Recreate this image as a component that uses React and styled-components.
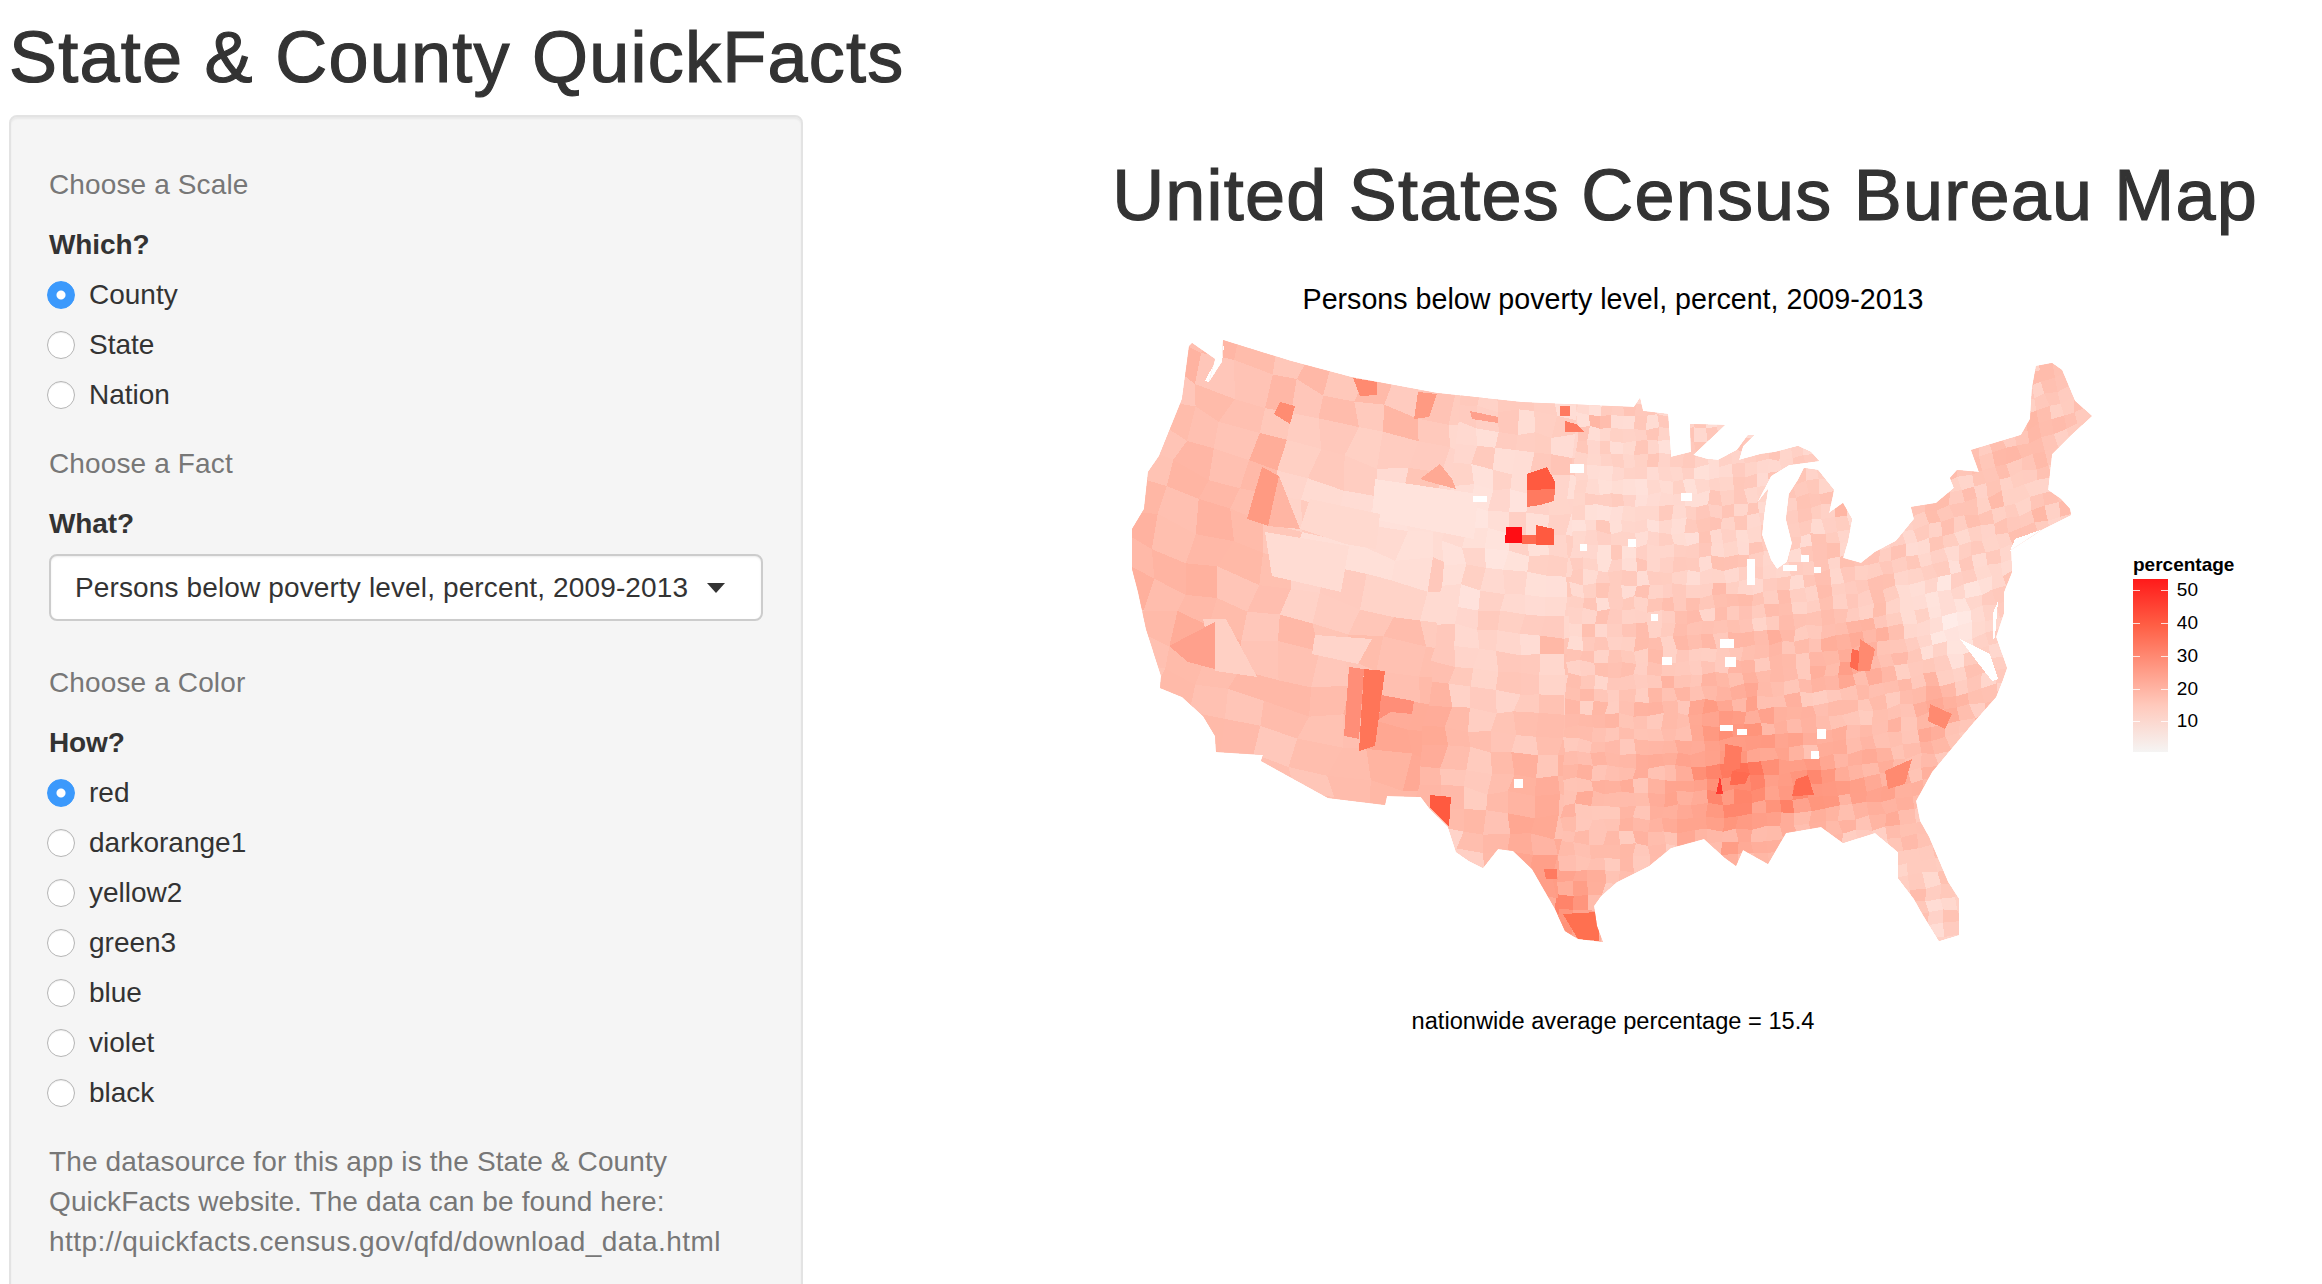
import React, { useMemo } from 'react';
import styled, { createGlobalStyle } from 'styled-components';

const GlobalStyle = createGlobalStyle`
  html, body {
    margin: 0;
    height: 1284px;
    overflow: hidden;
    background: #fff;
    font-family: "Liberation Sans", Arial, sans-serif;
    color: #333;
  }
  * { box-sizing: border-box; }
`;

const Page = styled.div`
  padding: 18px 0 0 9px;
`;

const Title = styled.h1`
  margin: 0 0 18px;
  font-size: 72px;
  line-height: 79px;
  font-weight: 400;
  letter-spacing: 1.25px;
  -webkit-text-stroke: 1.2px #333;
  color: #333;
`;

const Row = styled.div`
  display: flex;
  align-items: flex-start;
`;

const Sidebar = styled.form`
  flex: none;
  width: 794px;
  padding: 48px 38px 60px 38px;
  background: #f5f5f5;
  border: 2px solid #e3e3e3;
  border-radius: 8px;
  box-shadow: inset 0 2px 2px rgba(0, 0, 0, 0.05);
`;

const Muted = styled.p`
  margin: ${p => p.$top || 0}px 0 20px;
  font-size: 28px;
  line-height: 40px;
  letter-spacing: 0.13px;
  color: #777;
`;

const Url = styled.span`
  letter-spacing: 0.45px;
`;

const FieldLabel = styled.label`
  display: block;
  margin-bottom: ${p => p.$gap}px;
  font-size: 28px;
  line-height: 40px;
  font-weight: 700;
  letter-spacing: -0.1px;
  color: #333;
`;

const RadioRow = styled.label`
  display: flex;
  align-items: center;
  height: 50px;
  font-size: 28px;
  color: #333;
`;

const Radio = styled.input`
  appearance: none;
  flex: none;
  width: 28px;
  height: 28px;
  margin: 0 14px 0 -2px;
  border-radius: 50%;
  background: #fff;
  border: 1px solid #b5b5b5;
  box-shadow: inset 0 1px 1px rgba(0, 0, 0, 0.08);
  &:checked {
    background: radial-gradient(circle, #fff 0 4px, #3b99fc 5px);
    border-color: #3b99fc;
    box-shadow: none;
  }
`;

const SelectBox = styled.div`
  display: flex;
  align-items: center;
  justify-content: space-between;
  height: 67px;
  padding: 0 36px 0 24px;
  margin-bottom: 42px;
  background: #fff;
  border: 2px solid #ccc;
  border-radius: 8px;
  font-size: 28px;
  letter-spacing: 0.13px;
  color: #333;
  box-shadow: inset 0 1px 2px rgba(0, 0, 0, 0.08);
  white-space: nowrap;
`;

const Caret = styled.span`
  width: 0;
  height: 0;
  border-style: solid;
  border-width: 10px 9px 0 9px;
  border-color: #333 transparent transparent transparent;
`;

const Main = styled.main`
  flex: 1;
  min-width: 0;
  padding-top: 41px;
`;

const Heading = styled.h1`
  margin: 0 64px 44px 0;
  font-size: 72px;
  line-height: 79px;
  font-weight: 400;
  letter-spacing: 1.2px;
  text-align: right;
  white-space: nowrap;
  -webkit-text-stroke: 1.2px #333;
  color: #333;
`;

const Plot = styled.div`
  display: flex;
  margin-left: 327px;
`;

const MapColumn = styled.div`
  flex: none;
  width: 966px;
  text-align: center;
  color: #000;
`;

const PlotTitle = styled.div`
  font-size: 28.65px;
  line-height: 40px;
  margin-bottom: 10px;
`;

const PlotNote = styled.div`
  font-size: 23.65px;
  line-height: 40px;
  margin-top: 42px;
`;

const MapSvg = styled.svg`
  display: block;
  width: 966px;
  height: 630px;
`;

const Legend = styled.div`
  flex: none;
  margin: 274px 0 0 37px;
  color: #000;
`;

const LegendTitle = styled.div`
  font-size: 19px;
  line-height: 24px;
  font-weight: 700;
  margin-bottom: 2px;
`;

const LegendBody = styled.div`
  display: flex;
  gap: 9px;
`;

const LegendBar = styled.div`
  position: relative;
  width: 35px;
  height: 173px;
  background: linear-gradient(#ff1a1a, #ff5f45 27%, #ff9a85 52%, #ffc9bc 73%, #f5f4f3);
`;

const Tick = styled.i`
  position: absolute;
  left: 0;
  right: 0;
  height: 1px;
  border-left: 7px solid rgba(255, 255, 255, 0.8);
  border-right: 7px solid rgba(255, 255, 255, 0.8);
`;

const LegendLabels = styled.div`
  position: relative;
  width: 21px;
  font-size: 19px;
`;

const LegendLabel = styled.span`
  position: absolute;
  right: 0;
  line-height: 20px;
  margin-top: -10px;
`;

const OUTLINE = [
  [1223, 341], [1291, 362], [1351, 378], [1437, 394], [1521, 403], [1634, 408], [1640, 399], [1643, 412], [1668, 415],
  [1671, 458], [1691, 453], [1690, 425], [1725, 426], [1693, 456], [1707, 460], [1718, 461], [1737, 451], [1748, 436],
  [1754, 436], [1743, 447], [1739, 461], [1761, 455], [1775, 453], [1798, 447], [1811, 453], [1819, 462], [1789, 466],
  [1771, 477], [1757, 504], [1768, 490], [1764, 516], [1762, 536], [1771, 561], [1777, 570], [1787, 563], [1792, 544],
  [1786, 520], [1789, 495], [1798, 481], [1804, 469], [1818, 471], [1834, 491], [1829, 514], [1843, 504], [1852, 520],
  [1848, 542], [1843, 559], [1861, 564], [1875, 553], [1896, 542], [1914, 520], [1911, 508], [1936, 504], [1954, 489],
  [1950, 479], [1957, 471], [1979, 473], [1971, 451], [2021, 436], [2030, 420], [2032, 389], [2036, 367], [2052, 364],
  [2062, 371], [2075, 402], [2092, 417], [2071, 436], [2052, 455], [2048, 491], [2061, 500], [2070, 510], [2071, 516],
  [2043, 530], [2011, 551], [2012, 573], [2004, 593], [2004, 614], [1996, 638], [2007, 669], [2002, 683], [1996, 698],
  [1973, 724], [1952, 749], [1932, 773], [1916, 802], [1920, 822], [1929, 838], [1948, 883], [1959, 900], [1959, 936],
  [1939, 942], [1923, 916], [1914, 900], [1898, 879], [1898, 853], [1875, 834], [1843, 844], [1821, 828], [1786, 834],
  [1768, 865], [1743, 851], [1736, 867], [1725, 859], [1704, 840], [1671, 849], [1649, 867], [1617, 883], [1601, 897],
  [1594, 907], [1597, 927], [1603, 943], [1578, 940], [1565, 932], [1555, 910], [1532, 870], [1513, 852], [1498, 850],
  [1483, 869], [1469, 862], [1456, 853], [1448, 828], [1430, 810], [1421, 798], [1387, 797], [1385, 806], [1328, 799],
  [1261, 762], [1263, 756], [1216, 753], [1215, 737], [1203, 717], [1182, 698], [1160, 689], [1161, 677], [1146, 630],
  [1138, 593], [1132, 570], [1132, 530], [1144, 510], [1148, 473], [1159, 457], [1182, 400], [1189, 347], [1192, 344],
  [1215, 360], [1209, 383], [1222, 363],
];

// hot and pale counties that stand out from the generated cells
const COUNTIES = [
  ['#ff0d14', [[1506, 528], [1522, 528], [1522, 544], [1505, 544]]],
  ['#ff6a50', [[1522, 536], [1537, 536], [1537, 545], [1522, 545]]],
  ['#ff5a40', [[1536, 526], [1554, 530], [1554, 546], [1536, 546]]],
  ['#ff5a40', [[1527, 475], [1547, 468], [1555, 483], [1555, 490], [1527, 491]]],
  ['#ff7a60', [[1527, 491], [1555, 490], [1554, 502], [1540, 506], [1527, 508]]],
  ['#ff8a70', [[1353, 379], [1377, 383], [1377, 396], [1360, 397]]],
  ['#ff9a82', [[1418, 393], [1437, 395], [1429, 418], [1414, 420]]],
  ['#ff9a82', [[1247, 520], [1262, 468], [1279, 477], [1268, 527]]],
  ['#ffb5a3', [[1279, 477], [1300, 530], [1268, 527]]],
  ['#ff8c72', [[1274, 415], [1280, 403], [1295, 407], [1290, 425]]],
  ['#ff7a60', [[1560, 407], [1570, 407], [1570, 417], [1560, 417]]],
  ['#ff7a60', [[1565, 422], [1576, 425], [1584, 433], [1565, 433]]],
  ['#ffa08c', [[1470, 412], [1498, 418], [1498, 424], [1472, 420]]],
  ['#ffa994', [[1420, 480], [1440, 465], [1452, 480], [1456, 490], [1426, 482]]],
  ['#ffdcd3', [[1265, 533], [1349, 547], [1341, 593], [1272, 577]]],
  ['#ffe3dc', [[1375, 480], [1478, 495], [1474, 540], [1372, 520]]],
  ['#ffd9cf', [[1310, 500], [1380, 515], [1376, 550], [1345, 545], [1300, 530]]],
  ['#ff7558', [[1364, 670], [1385, 672], [1375, 747], [1359, 752]]],
  ['#ff8e78', [[1349, 668], [1364, 670], [1359, 740], [1344, 737]]],
  ['#ff8e78', [[1381, 696], [1414, 702], [1412, 715], [1391, 713], [1379, 720]]],
  ['#ffd0c4', [[1203, 620], [1226, 620], [1257, 678], [1215, 672]]],
  ['#ffa08c', [[1169, 647], [1215, 623], [1215, 670], [1188, 663]]],
  ['#ffd4ca', [[1315, 636], [1372, 640], [1358, 665], [1312, 655]]],
  ['#ff5a40', [[1430, 796], [1451, 798], [1449, 828], [1430, 808]]],
  ['#ff7a60', [[1544, 870], [1557, 870], [1557, 880], [1546, 880]]],
  ['#ff7050', [[1563, 915], [1598, 913], [1599, 942], [1578, 940]]],
  ['#ff3a30', [[1720, 777], [1723, 795], [1716, 795]]],
  ['#ff6a50', [[1732, 772], [1750, 774], [1745, 785], [1730, 786]]],
  ['#ff7a60', [[1725, 745], [1742, 748], [1740, 770], [1724, 772]]],
  ['#ff6a50', [[1796, 780], [1808, 776], [1814, 796], [1792, 797]]],
  ['#ff6a50', [[1852, 650], [1860, 652], [1858, 672], [1850, 668]]],
  ['#ff8a70', [[1860, 640], [1875, 650], [1870, 672], [1858, 672]]],
  ['#ff8a70', [[1930, 705], [1952, 715], [1945, 730], [1928, 722]]],
  ['#ff8a70', [[1885, 772], [1912, 760], [1905, 785], [1888, 790]]],
];

const HOLES = [
  [1681, 494, 11, 8], [1628, 540, 8, 8], [1651, 615, 7, 7], [1662, 658, 10, 8], [1720, 640, 14, 9], [1725, 658, 11, 10],
  [1747, 560, 8, 26], [1801, 556, 8, 7], [1783, 566, 14, 6], [1814, 568, 7, 6], [1720, 726, 13, 6], [1737, 730, 10, 6],
  [1817, 730, 9, 10], [1811, 752, 8, 8], [1473, 497, 14, 6], [1570, 465, 14, 9], [1580, 545, 7, 7], [1514, 780, 9, 9],
];

const WATER = [
  [[1215, 350], [1224, 347], [1222, 363], [1209, 383], [1205, 382], [1215, 363]],
  [[1993, 614], [1998, 602], [1995, 638], [1993, 640]],
  [[1960, 640], [1990, 655], [1998, 680], [1992, 682], [1975, 660]],
  [[2015, 540], [2043, 530], [2010, 552]],
];

const hash = (a, b) => {
  const s = Math.sin(a * 127.1 + b * 311.7) * 43758.5453;
  return s - Math.floor(s);
};

const BUMPS = [
  [1730, 770, 30, 55, 11], [1790, 790, 35, 22, 6], [1815, 790, 16, 16, 5], [1855, 655, 25, 25, 9], [1880, 790, 50, 30, 6],
  [1945, 710, 30, 30, 6], [1650, 800, 120, 50, 4], [1400, 740, 60, 60, 5], [1530, 860, 30, 60, 7], [1570, 915, 25, 25, 14],
  [1750, 730, 150, 90, 4], [1955, 622, 26, 36, -8], [1350, 540, 70, 50, -7], [1500, 560, 60, 80, -3], [1640, 500, 70, 60, -1.5],
  [2040, 420, 60, 70, 3], [1960, 510, 60, 30, 1.5], [1200, 500, 70, 130, 3], [1200, 680, 50, 50, 3],
];

const heat = (x, y) => {
  let p = 14;
  if (x < 1440) p += 3;
  BUMPS.forEach(([bx, by, sx, sy, amp]) => {
    const dx = (x - bx) / sx;
    const dy = (y - by) / sy;
    p += amp * Math.exp(-(dx * dx + dy * dy) / 2);
  });
  return p;
};

const STOPS = [
  [0, [255, 247, 245]], [10, [255, 222, 214]], [20, [255, 185, 168]], [30, [255, 146, 121]],
  [40, [255, 103, 77]], [50, [255, 47, 37]], [55, [255, 13, 20]],
];

const shade = p => {
  const v = Math.max(0, Math.min(55, p));
  for (let i = 1; i < STOPS.length; i++) {
    if (v <= STOPS[i][0]) {
      const [p0, c0] = STOPS[i - 1];
      const [p1, c1] = STOPS[i];
      const t = (v - p0) / (p1 - p0);
      return `rgb(${c0.map((c, k) => Math.round(c + (c1[k] - c) * t)).join(',')})`;
    }
  }
  return 'rgb(255,13,20)';
};

// conic look: rows bend up at the edges, columns spread towards the south
const warp = (u, v) => {
  const dx = u - 1640;
  return [1640 + dx * (1 + (v - 600) / 1800), v - (dx * dx) / 2600];
};

const BANDS = [
  { x0: 1000, x1: 1440, w: 33, h: 28, jitter: 0.4, noise: 3, seed: 1 },
  { x0: 1440, x1: 1570, w: 21, h: 20, jitter: 0.3, noise: 3.4, seed: 2 },
  { x0: 1570, x1: 2240, w: 13, h: 13, jitter: 0.3, noise: 4, seed: 3 },
];

const buildCells = () => {
  const cells = [];
  BANDS.forEach(({ x0, x1, w, h, jitter, noise, seed }) => {
    const corner = (i, j) => {
      const u = x0 + i * w + (hash(i + seed, j) - 0.5) * w * jitter;
      const v = 300 + j * h + (hash(i, j + seed * 7) - 0.5) * h * jitter;
      return warp(u, v);
    };
    for (let i = 0; x0 + i * w < x1; i++) {
      for (let j = 0; 300 + j * h < 1060; j++) {
        const [cx, cy] = warp(x0 + (i + 0.5) * w, 300 + (j + 0.5) * h);
        const points = [corner(i, j), corner(i + 1, j), corner(i + 1, j + 1), corner(i, j + 1)];
        const n = hash(i * 3 + seed, j * 5) - 0.5;
        const spike = hash(i * 7, j * 11 + seed) > 0.96 ? 4 : 0;
        cells.push({
          id: `${seed}-${i}-${j}`,
          points: points.map(q => q.join(',')).join(' '),
          fill: shade(heat(cx, cy) + n * noise * 2 + spike),
        });
      }
    }
  });
  return cells;
};

const toPoints = list => list.map(q => q.join(',')).join(' ');

const UsMap = () => {
  const cells = useMemo(buildCells, []);
  return (
    <MapSvg viewBox="1130 330 966 630">
      <defs>
        <clipPath id="us-outline">
          <polygon points={toPoints(OUTLINE)} />
        </clipPath>
      </defs>
      <g clipPath="url(#us-outline)" shapeRendering="crispEdges">
        <polygon points={toPoints(OUTLINE)} fill="#ffc6b8" />
        {cells.map(c => (
          <polygon key={c.id} points={c.points} fill={c.fill} />
        ))}
        {COUNTIES.map(([fill, pts]) => (
          <polygon key={pts.join()} points={toPoints(pts)} fill={fill} />
        ))}
        {HOLES.map(([x, y, w, h]) => (
          <rect key={`${x}-${y}`} x={x} y={y} width={w} height={h} fill="#fff" />
        ))}
        {WATER.map(pts => (
          <polygon key={pts.join()} points={toPoints(pts)} fill="#fff" />
        ))}
      </g>
    </MapSvg>
  );
};

const SCALES = ['County', 'State', 'Nation'];
const COLORS = ['red', 'darkorange1', 'yellow2', 'green3', 'blue', 'violet', 'black'];
const TICKS = [
  { label: '50', y: 11 },
  { label: '40', y: 44 },
  { label: '30', y: 77 },
  { label: '20', y: 110 },
  { label: '10', y: 142 },
];

const RadioGroup = ({ name, options }) => (
  <div>
    {options.map((option, i) => (
      <RadioRow key={option}>
        <Radio type="radio" name={name} defaultChecked={i === 0} />
        {option}
      </RadioRow>
    ))}
  </div>
);

export default function App() {
  return (
    <Page>
      <GlobalStyle />
      <Title>State &amp; County QuickFacts</Title>
      <Row>
        <Sidebar>
          <Muted>Choose a Scale</Muted>
          <FieldLabel $gap={5}>Which?</FieldLabel>
          <RadioGroup name="scale" options={SCALES} />
          <Muted $top={24}>Choose a Fact</Muted>
          <FieldLabel $gap={10}>What?</FieldLabel>
          <SelectBox>
            Persons below poverty level, percent, 2009-2013
            <Caret />
          </SelectBox>
          <Muted>Choose a Color</Muted>
          <FieldLabel $gap={5}>How?</FieldLabel>
          <RadioGroup name="color" options={COLORS} />
          <Muted $top={24}>
            The datasource for this app is the State &amp; County
            <br />
            QuickFacts website. The data can be found here:
            <br />
            <Url>http://quickfacts.census.gov/qfd/download_data.html</Url>
          </Muted>
        </Sidebar>
        <Main>
          <Heading>United States Census Bureau Map</Heading>
          <Plot>
            <MapColumn>
              <PlotTitle>Persons below poverty level, percent, 2009-2013</PlotTitle>
              <UsMap />
              <PlotNote>nationwide average percentage = 15.4</PlotNote>
            </MapColumn>
            <Legend>
              <LegendTitle>percentage</LegendTitle>
              <LegendBody>
                <LegendBar>
                  {TICKS.map(t => (
                    <Tick key={t.label} style={{ top: t.y }} />
                  ))}
                </LegendBar>
                <LegendLabels>
                  {TICKS.map(t => (
                    <LegendLabel key={t.label} style={{ top: t.y }}>
                      {t.label}
                    </LegendLabel>
                  ))}
                </LegendLabels>
              </LegendBody>
            </Legend>
          </Plot>
        </Main>
      </Row>
    </Page>
  );
}
